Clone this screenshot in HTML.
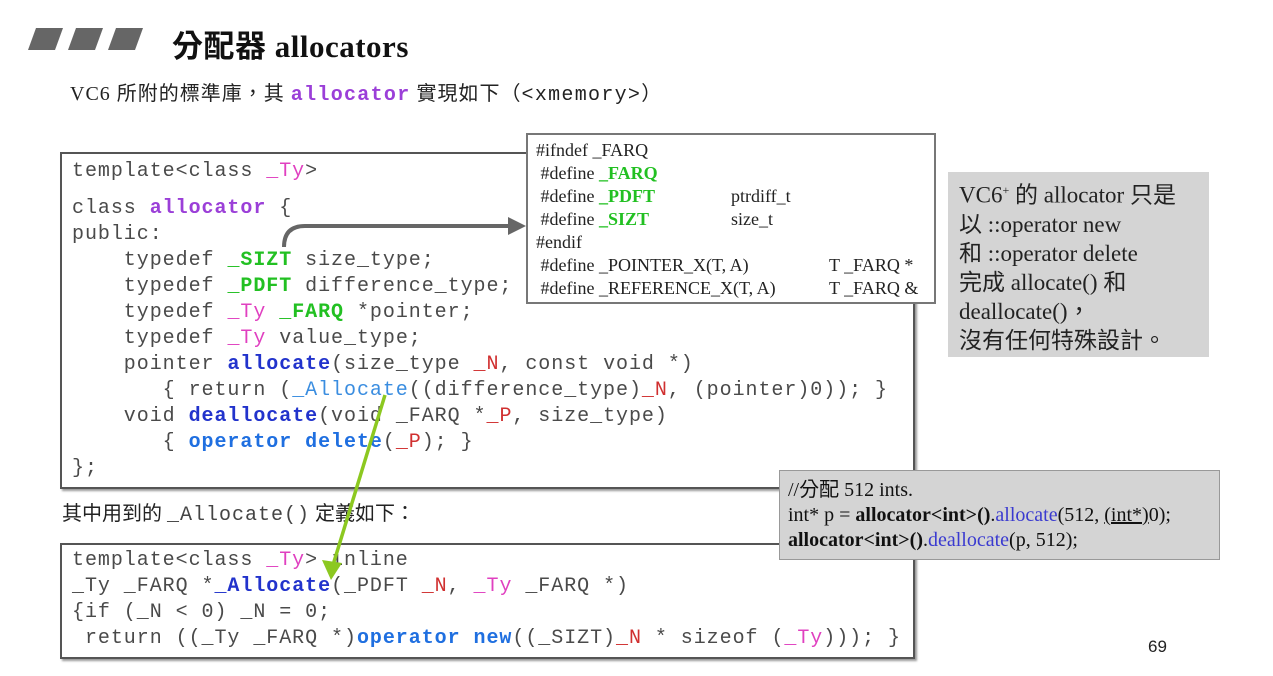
<!DOCTYPE html>
<html><head><meta charset="utf-8"><style>
body{margin:0;width:1273px;height:676px;background:#fff;position:relative;overflow:hidden;font-family:"Liberation Serif","Noto Serif CJK SC",serif;}
.a{position:absolute;white-space:pre;}
.m{font-family:"Liberation Mono",monospace;font-size:20px;letter-spacing:0.95px;color:#4a4a4a;line-height:26px;}
.pk{color:#e040c0}.g{color:#22c022;font-weight:bold}.pu{color:#9b3fd8;font-weight:bold}
.bl{color:#2233cc;font-weight:bold}.lb{color:#3a8de0}.lbb{color:#1f6fe0;font-weight:bold}.r{color:#d03030}
.box{position:absolute;border:2px solid #555;background:#fff;box-shadow:2px 2px 2px #999;}
.sf{font-family:"Liberation Serif",serif;font-size:18px;line-height:23px;color:#222;}
.gr{position:absolute;background:#d4d4d4;}
</style></head><body>
<svg style="position:absolute;left:28px;top:28px" width="120" height="24"><polygon points="8,0 35,0 27,22 0,22" fill="#666"/><polygon points="48,0 75,0 67,22 40,22" fill="#666"/><polygon points="88,0 115,0 107,22 80,22" fill="#666"/></svg>
<div class="a" style="left:172px;top:21px;font-size:31px;letter-spacing:0.5px;font-weight:bold;color:#111;font-family:'Liberation Serif','Noto Sans CJK TC',serif">分配器 allocators</div>
<div class="a" style="left:70px;top:77px;font-size:20px;letter-spacing:1px;color:#222;font-family:'Liberation Serif','Noto Sans CJK TC',serif">VC6 所附的標準庫，其 <span style="font-family:'Liberation Mono';color:#9b3fd8;font-weight:bold;letter-spacing:1.3px">allocator</span> 實現如下（<span style="font-family:'Liberation Mono';letter-spacing:1.3px">&lt;xmemory&gt;</span>）</div>

<div class="box" style="left:60px;top:152px;width:851px;height:333px"></div>
<div class="a m" style="left:72px;top:159px">template&lt;class <span class="pk">_Ty</span>&gt;</div>
<div class="a m" style="left:72px;top:196px;line-height:26px">class <span class="pu">allocator</span> {
public:
    typedef <span class="g">_SIZT</span> size_type;
    typedef <span class="g">_PDFT</span> difference_type;
    typedef <span class="pk">_Ty</span> <span class="g">_FARQ</span> *pointer;
    typedef <span class="pk">_Ty</span> value_type;
    pointer <span class="bl">allocate</span>(size_type <span class="r">_N</span>, const void *)
       { return (<span class="lb">_Allocate</span>((difference_type)<span class="r">_N</span>, (pointer)0)); }
    void <span class="bl">deallocate</span>(void _FARQ *<span class="r">_P</span>, size_type)
       { <span class="lbb">operator delete</span>(<span class="r">_P</span>); }
};</div>

<div class="a" style="left:62px;top:497px;font-size:20px;color:#222;font-family:'Liberation Serif','Noto Sans CJK TC',serif">其中用到的 <span style="font-family:'Liberation Mono';color:#444;letter-spacing:1px">_Allocate()</span> 定義如下：</div>
<div class="box" style="left:60px;top:543px;width:851px;height:112px"></div>
<div class="a m" style="left:72px;top:548px">template&lt;class <span class="pk">_Ty</span>&gt; inline
_Ty _FARQ *<span class="bl">_Allocate</span>(_PDFT <span class="r">_N</span>, <span class="pk">_Ty</span> _FARQ *)
{if (_N &lt; 0) _N = 0;
 return ((_Ty _FARQ *)<span class="lbb">operator new</span>((_SIZT)<span class="r">_N</span> * sizeof (<span class="pk">_Ty</span>))); }</div>

<div class="a" style="left:526px;top:133px;width:406px;height:167px;border:2px solid #777;background:#fff"></div>
<div class="a sf" style="left:536px;top:139px">#ifndef _FARQ
 #define <span class="g">_FARQ</span>
 #define <span class="g">_PDFT</span>
 #define <span class="g">_SIZT</span>
#endif
 #define _POINTER_X(T, A)
 #define _REFERENCE_X(T, A)</div>
<div class="a sf" style="left:731px;top:185px">ptrdiff_t
size_t</div>
<div class="a sf" style="left:829px;top:254px">T _FARQ *
T _FARQ &amp;</div>

<div class="gr" style="left:948px;top:172px;width:261px;height:185px"></div>
<div class="a" style="left:959px;top:176px;font-size:23px;line-height:29px;color:#222;font-family:'Liberation Serif','Noto Sans CJK TC',serif">VC6<sup style="font-size:12px">+</sup> 的 allocator 只是
以 ::operator new
和 ::operator delete
完成 allocate() 和
deallocate()，
沒有任何特殊設計。</div>

<div class="gr" style="left:779px;top:470px;width:439px;height:88px;border:1px solid #999"></div>
<div class="a" style="left:788px;top:478px;font-size:20px;line-height:25px;color:#111;font-family:'Liberation Serif','Noto Sans CJK TC',serif">//分配 512 ints.
int* p = <b>allocator&lt;int&gt;()</b>.<span style="color:#3a3ad0">allocate</span>(512, <u>(int*)</u>0);
<b>allocator&lt;int&gt;()</b>.<span style="color:#3a3ad0">deallocate</span>(p, 512);</div>

<div class="a" style="left:1148px;top:637px;font-size:17px;font-family:'Liberation Sans',sans-serif;color:#222">69</div>

<svg class="a" style="left:0;top:0" width="1273" height="676">
<path d="M284 247 Q284 226 305 226 L510 226" stroke="#666" stroke-width="4" fill="none"/>
<polygon points="508,217 526,226 508,235" fill="#666"/>
<line x1="385" y1="395" x2="333" y2="565" stroke="#8cc820" stroke-width="3.5"/>
<polygon points="322,560 331,580 342,563" fill="#8cc820"/>
</svg>
</body></html>
